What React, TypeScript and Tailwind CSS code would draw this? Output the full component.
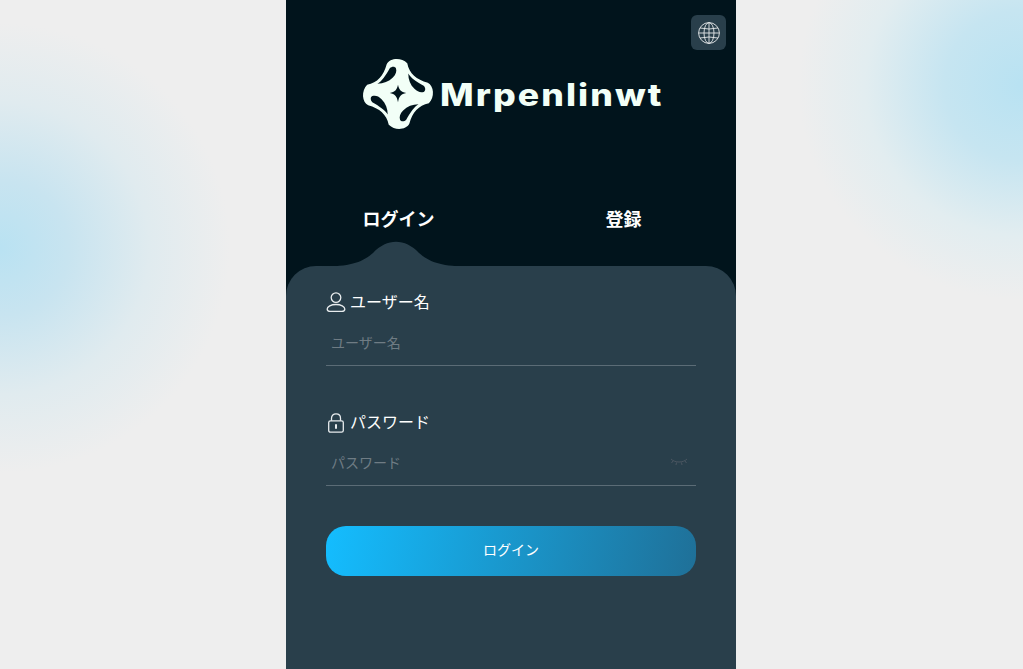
function LogoMark() {
  const crescent = "M16 26C20 24 24 18 28 11C30 9 33 9 34 11C35 14 34 17 31 20C27 24 22 26 16 26Z";
  return (
    <svg width="74" height="74" viewBox="0 0 72 72" className="shrink-0">
      <path
        d="M6 27C16 25 22 18 25 7C28 1 39 0 45 6C47 16 54 22 65 25C71 28 72 39 66 45C56 47 50 54 47 65C44 71 33 72 27 66C25 56 18 50 7 47C1 44 0 33 6 27Z"
        fill="#f2fff7"
      />
      <path d={crescent} fill="#01141c" />
      <path d={crescent} fill="#01141c" transform="rotate(90 36 36)" />
      <path d={crescent} fill="#01141c" transform="rotate(180 36 36)" />
      <path d={crescent} fill="#01141c" transform="rotate(270 36 36)" />
      <path d="M36 27C37 32 39 34 44 35C39 36 37 38 36 44C35 38 33 36 28 35C33 34 35 32 36 27Z" fill="#01141c" />
    </svg>
  );
}

function GlobeIcon() {
  return (
    <svg width="22" height="22" viewBox="0 0 22 22" fill="none" stroke="#e5e9ea" strokeWidth="0.9">
      <circle cx="11" cy="11" r="10.4" />
      <ellipse cx="11" cy="11" rx="5" ry="10.4" />
      <path d="M11 0.6V21.400M0.6 11H21.400M2 6Q11 8 20 6M2 16Q11 14 20 16" />
    </svg>
  );
}

function UserIcon() {
  return (
    <svg width="20" height="20" viewBox="0 0 20 20" fill="none" stroke="#e8ecee" strokeWidth="1.3" className="mt-[2px]">
      <circle cx="10" cy="5.600" r="4.800" />
      <path d="M4 19.400H16C17.800 19.400 18.800 18.400 18.800 17C18.800 14.500 15 12.500 10 12.500C5 12.500 1.200 14.500 1.200 17C1.200 18.400 2.200 19.400 4 19.400Z" />
    </svg>
  );
}

function LockIcon() {
  return (
    <svg width="20" height="20" viewBox="0 0 20 20" fill="none" stroke="#e8ecee" strokeWidth="1.3" className="mt-[3px]">
      <rect x="2.700" y="7.800" width="14.600" height="11.400" rx="1.800" />
      <path d="M5.500 7.800V5.200C5.500 2.400 7.400 0.800 10 0.800C12.600 0.800 14.500 2.400 14.500 5.200V7.800" />
      <path d="M10 12V15" strokeWidth="2" strokeLinecap="round" />
    </svg>
  );
}

function Field({ label, password }: { label: string; password?: boolean }) {
  return (
    <div className="h-[120px]">
      <div className="flex h-5 items-center gap-[4px] text-base text-white">
        {password ? <LockIcon /> : <UserIcon />}
        <span>{label}</span>
      </div>
      <div className="mt-[14px] flex h-[41px] items-center justify-between border-b border-[#5b6c76] pb-[6px] pl-[5px] pr-2">
        <span className="text-sm text-[#6f7c84]">{label}</span>
        {password && (
          <svg width="18" height="8" viewBox="0 0 18 8" fill="none" stroke="#4b5661" strokeWidth="1">
            <path d="M1 1C5 5 13 5 17 1M3 3L1.500 5M6.500 4.500L6 7M11.500 4.500L12 7M15 3L16.500 5" />
          </svg>
        )}
      </div>
    </div>
  );
}

export default function App() {
  return (
    <div className="flex h-[669px] justify-center overflow-hidden bg-[#eeeeee] bg-[radial-gradient(ellipse_230px_225px_at_0px_248px,#b9e2f2_0%,#c8e4f0_30%,#e0ebef_65%,transparent_100%),radial-gradient(ellipse_225px_215px_at_1023px_85px,#b8e2f2_0%,#c6e5f1_35%,#e2edf0_70%,transparent_100%)] pr-px font-['Noto_Sans_CJK_JP','Liberation_Sans',sans-serif]">
      <div className="relative flex w-[450px] flex-col bg-[#01141c]">
        <button className="absolute right-[10px] top-[15px] flex h-[35px] w-[35px] items-center justify-center rounded-md bg-[#293f4b]">
          <GlobeIcon />
        </button>

        <div className="flex h-[190px] items-start justify-center pt-[57px]">
          <div className="flex items-center gap-[5px]">
            <LogoMark />
            <span className="w-[221px] origin-left scale-x-[1.15] font-['Inter',sans-serif] text-[31px] font-extrabold leading-none tracking-[1.8px] text-[#f2fff7]">
              Mrpenlinwt
            </span>
          </div>
        </div>

        <div className="grid h-[76px] grid-cols-2 pt-[14px] text-center text-lg font-bold leading-7 text-white">
          <div>ログイン</div>
          <div>登録</div>
        </div>

        <div className="relative flex-1 rounded-t-[30px] bg-[#293f4b] px-10 pt-[25px]">
          <svg width="150" height="26" viewBox="0 0 150 26" className="absolute left-[35px] top-[-25px]" fill="#293f4b">
            <path d="M0 26C30 25 40 22 52 12C66 -3 84 -3 98 12C110 22 120 25 150 26Z" />
          </svg>
          <Field label="ユーザー名" />
          <Field label="パスワード" password />
          <button className="mt-[-5px] h-[50px] w-full rounded-[20px] bg-[linear-gradient(100deg,#14bdff,#1f7098)] pb-1 text-sm font-normal text-white">
            ログイン
          </button>
        </div>
      </div>
    </div>
  );
}
